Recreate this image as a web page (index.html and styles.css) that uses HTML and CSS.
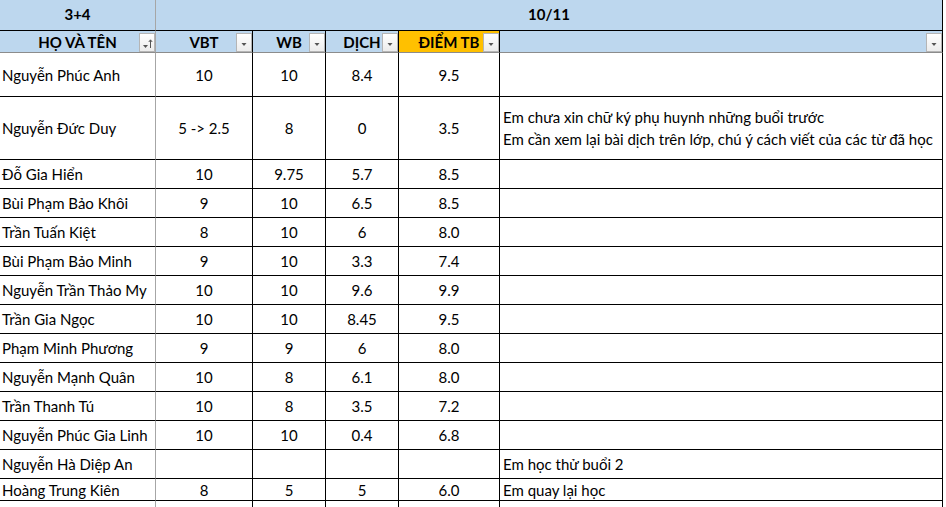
FILE: index.html
```html
<!DOCTYPE html>
<html lang="vi">
<head>
<meta charset="utf-8">
<title>Bảng điểm</title>
<link rel="stylesheet" href="styles.css">
</head>
<body>
<div class="sheet">
  <div class="c h1 first">3+4</div>
  <div class="c h1 span5">10/11</div>

  <div class="c h2 first">HỌ VÀ TÊN<span class="fbtn"><svg width="14" height="16" viewBox="0 0 14 16"><path d="M3 10h5l-2.5 3z" fill="#555"/><path d="M10.5 13V5M8.8 7l1.7-2.2L12.2 7" stroke="#555" stroke-width="1" fill="none"/></svg></span></div>
  <div class="c h2">VBT<span class="fbtn"><svg width="14" height="16" viewBox="0 0 14 16"><path d="M4.5 8h5l-2.5 3z" fill="#555"/></svg></span></div>
  <div class="c h2">WB<span class="fbtn"><svg width="14" height="16" viewBox="0 0 14 16"><path d="M4.5 8h5l-2.5 3z" fill="#555"/></svg></span></div>
  <div class="c h2">DỊCH<span class="fbtn"><svg width="14" height="16" viewBox="0 0 14 16"><path d="M4.5 8h5l-2.5 3z" fill="#555"/></svg></span></div>
  <div class="c h2 gold">ĐIỂM TB<span class="fbtn"><svg width="14" height="16" viewBox="0 0 14 16"><path d="M4.5 8h5l-2.5 3z" fill="#555"/></svg></span></div>
  <div class="c h2"><span class="fbtn"><svg width="14" height="16" viewBox="0 0 14 16"><path d="M4.5 8h5l-2.5 3z" fill="#555"/></svg></span></div>

  <div class="c first name">Nguyễn Phúc Anh</div><div class="c">10</div><div class="c">10</div><div class="c">8.4</div><div class="c">9.5</div><div class="c note"></div>
  <div class="c first name">Nguyễn Đức Duy</div><div class="c">5 -&gt; 2.5</div><div class="c">8</div><div class="c">0</div><div class="c">3.5</div><div class="c note"><span>Em chưa xin chữ ký phụ huynh những buổi trước</span><span>Em cần xem lại bài dịch trên lớp, chú ý cách viết của các từ đã học</span></div>
  <div class="c first name">Đỗ Gia Hiển</div><div class="c">10</div><div class="c">9.75</div><div class="c">5.7</div><div class="c">8.5</div><div class="c note"></div>
  <div class="c first name">Bùi Phạm Bảo Khôi</div><div class="c">9</div><div class="c">10</div><div class="c">6.5</div><div class="c">8.5</div><div class="c note"></div>
  <div class="c first name">Trần Tuấn Kiệt</div><div class="c">8</div><div class="c">10</div><div class="c">6</div><div class="c">8.0</div><div class="c note"></div>
  <div class="c first name">Bùi Phạm Bảo Minh</div><div class="c">9</div><div class="c">10</div><div class="c">3.3</div><div class="c">7.4</div><div class="c note"></div>
  <div class="c first name">Nguyễn Trần Thảo My</div><div class="c">10</div><div class="c">10</div><div class="c">9.6</div><div class="c">9.9</div><div class="c note"></div>
  <div class="c first name">Trần Gia Ngọc</div><div class="c">10</div><div class="c">10</div><div class="c">8.45</div><div class="c">9.5</div><div class="c note"></div>
  <div class="c first name">Phạm Minh Phương</div><div class="c">9</div><div class="c">9</div><div class="c">6</div><div class="c">8.0</div><div class="c note"></div>
  <div class="c first name">Nguyễn Mạnh Quân</div><div class="c">10</div><div class="c">8</div><div class="c">6.1</div><div class="c">8.0</div><div class="c note"></div>
  <div class="c first name">Trần Thanh Tú</div><div class="c">10</div><div class="c">8</div><div class="c">3.5</div><div class="c">7.2</div><div class="c note"></div>
  <div class="c first name">Nguyễn Phúc Gia Linh</div><div class="c">10</div><div class="c">10</div><div class="c">0.4</div><div class="c">6.8</div><div class="c note"></div>
  <div class="c first name">Nguyễn Hà Diệp An</div><div class="c"></div><div class="c"></div><div class="c"></div><div class="c"></div><div class="c note">Em học thử buổi 2</div>
  <div class="c first name">Hoàng Trung Kiên</div><div class="c">8</div><div class="c">5</div><div class="c">5</div><div class="c">6.0</div><div class="c note">Em quay lại học</div>
  <div class="c first"></div><div class="c"></div><div class="c"></div><div class="c"></div><div class="c"></div><div class="c note"></div>
</div>
</body>
</html>
```

FILE: styles.css
```css
html, body {
  margin: 0;
  padding: 0;
  background: #fff;
  overflow: hidden;
}

.sheet {
  display: grid;
  grid-template-columns: 156px 97px 73px 73px 101px 443px;
  grid-template-rows: 31px 22px 44px 63px repeat(11, 29px) 22px 29px;
  height: 507px;
  overflow: hidden;
  font-family: Lato, "Open Sans", sans-serif;
  font-size: 15px;
  color: #000;
}

.c {
  box-sizing: border-box;
  border-right: 1px solid #000;
  border-bottom: 1px solid #000;
  display: flex;
  align-items: center;
  justify-content: center;
  position: relative;
  white-space: nowrap;
  overflow: hidden;
}

.c.first {
  border-right-color: #a6a6a6;
}

.name {
  justify-content: flex-start;
  padding-left: 2px;
}

.note {
  justify-content: flex-start;
  padding-left: 3px;
  flex-direction: row;
}

.note:has(span) {
  flex-direction: column;
  align-items: flex-start;
  justify-content: center;
  line-height: 22px;
}

.h1 {
  background: #bdd7ee;
  font-weight: bold;
  padding-bottom: 2px;
}

.span5 {
  grid-column: 2 / 7;
}

.h2 {
  background: #bdd7ee;
  font-weight: bold;
  border-bottom-color: #8c8c8c;
}

.h2.gold {
  background: #ffc000;
}

.fbtn {
  position: absolute;
  right: 0;
  top: 2px;
  bottom: 0;
  width: 16px;
  box-sizing: border-box;
  border: 1px solid #b5b5b5;
  background: linear-gradient(#ffffff, #ececec);
  display: flex;
  align-items: center;
  justify-content: center;
}

.fbtn svg {
  display: block;
}
```
